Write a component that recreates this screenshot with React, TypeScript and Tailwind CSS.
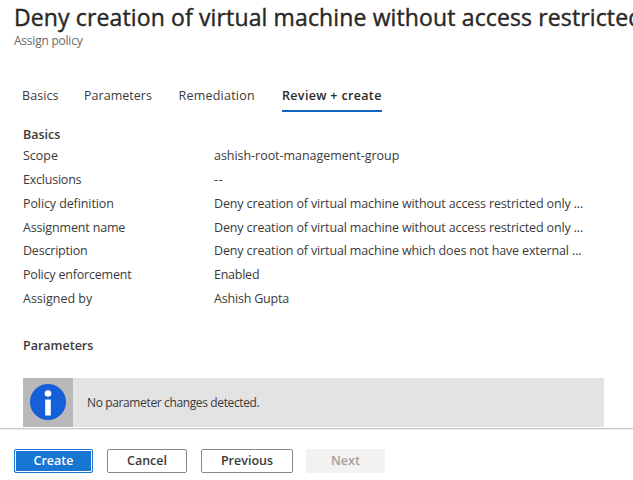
const tabs = [
  { label: 'Basics', cls: 'w-[37px] tracking-[0.1px]' },
  { label: 'Parameters', cls: 'w-[69.5px] tracking-[0.03px]' },
  { label: 'Remediation', cls: 'w-[77.5px] tracking-[0.23px]' },
];

const rows = [
  { label: 'Scope', value: 'ashish-root-management-group', l: '', v: 'tracking-[-0.04px]' },
  { label: 'Exclusions', value: '--', l: 'tracking-[-0.22px]', v: 'tracking-[0.8px]' },
  { label: 'Policy definition', value: 'Deny creation of virtual machine without access restricted only ...', l: 'tracking-[-0.1px]', v: 'tracking-[-0.138px]' },
  { label: 'Assignment name', value: 'Deny creation of virtual machine without access restricted only ...', l: 'tracking-[-0.16px]', v: 'tracking-[-0.138px]' },
  { label: 'Description', value: 'Deny creation of virtual machine which does not have external ...', l: 'tracking-[-0.2px]', v: 'tracking-[-0.138px]' },
  { label: 'Policy enforcement', value: 'Enabled', l: 'tracking-[-0.2px]', v: 'tracking-[-0.25px]' },
  { label: 'Assigned by', value: 'Ashish Gupta', l: '', v: 'tracking-[-0.2px]' },
];

export default function App() {
  return (
    <div className="flex h-[480px] w-[633px] flex-col overflow-hidden bg-white font-['Open_Sans','Noto_Sans',sans-serif] text-[12.5px] whitespace-nowrap text-[#3b3a39]">
      <header className="h-[80px] pl-[14px]">
        <h1 className="h-[33px] text-[23px] leading-[34px] tracking-[0.13px] text-[#292827] [-webkit-text-stroke:0.4px_#292827]">
          Deny creation of virtual machine without access restricted
        </h1>
        <p className="h-4 text-[12px] leading-4 tracking-[-0.23px] text-[#6b6967]">Assign policy</p>
      </header>
      <nav className="flex h-[32px] gap-[25px] pl-[22px] leading-[32px]">
        {tabs.map((t) => (
          <span key={t.label} className={t.cls}>{t.label}</span>
        ))}
        <span className="ml-[1px] h-[32px] w-[100px] border-b-2 border-[#1068c4] tracking-[0.34px] font-semibold text-[#292827]">Review + create</span>
      </nav>
      <main className="flex h-[316px] flex-col pl-[23px]">
        <h2 className="mt-[13px] h-[19px] leading-5 font-semibold">Basics</h2>
        <dl>
          {rows.map((r) => (
            <div key={r.label} className="flex h-[23.85px] leading-[24px]">
              <dt className="w-[191px]"><span className={r.l}>{r.label}</span></dt>
              <dd><span className={r.v}>{r.value}</span></dd>
            </div>
          ))}
        </dl>
        <h2 className="mt-[25px] h-5 leading-5 font-semibold">Parameters</h2>
        <div className="mt-[22px] flex h-[49px] w-[581px] items-center bg-[#e3e3e3]">
          <div className="flex h-full w-[50px] items-center justify-center bg-[#b9b9b9]">
            <svg width="36" height="36" viewBox="0 0 36 36">
              <circle cx="18" cy="18" r="18" fill="#1560d8" />
              <circle cx="18" cy="9.5" r="3.3" fill="#fff" />
              <rect x="15.2" y="15.5" width="5.6" height="16" fill="#fff" />
            </svg>
          </div>
          <span className="ml-[14px] pt-[1px] text-[12px] tracking-[-0.37px]">No parameter changes detected.</span>
        </div>
      </main>
      <footer className="flex h-[52px] gap-[14px] border-t border-[#c8c8c8] pt-5 pl-[14px] font-semibold shadow-[inset_0_1px_0_0_#eeeeee]">
        <button className="h-6 w-[79px] rounded-[2px] border border-[#1876d2] bg-[#1876d2] text-white shadow-[inset_0_0_0_1px_white]">Create</button>
        <button className="h-6 w-[80px] rounded-[2px] border border-[#8a8886]">Cancel</button>
        <button className="h-6 w-[92px] rounded-[2px] border border-[#8a8886]">Previous</button>
        <button className="-ml-px h-6 w-[79px] rounded-[2px] bg-[#f3f2f1] text-[#a19f9d]">Next</button>
      </footer>
    </div>
  );
}
